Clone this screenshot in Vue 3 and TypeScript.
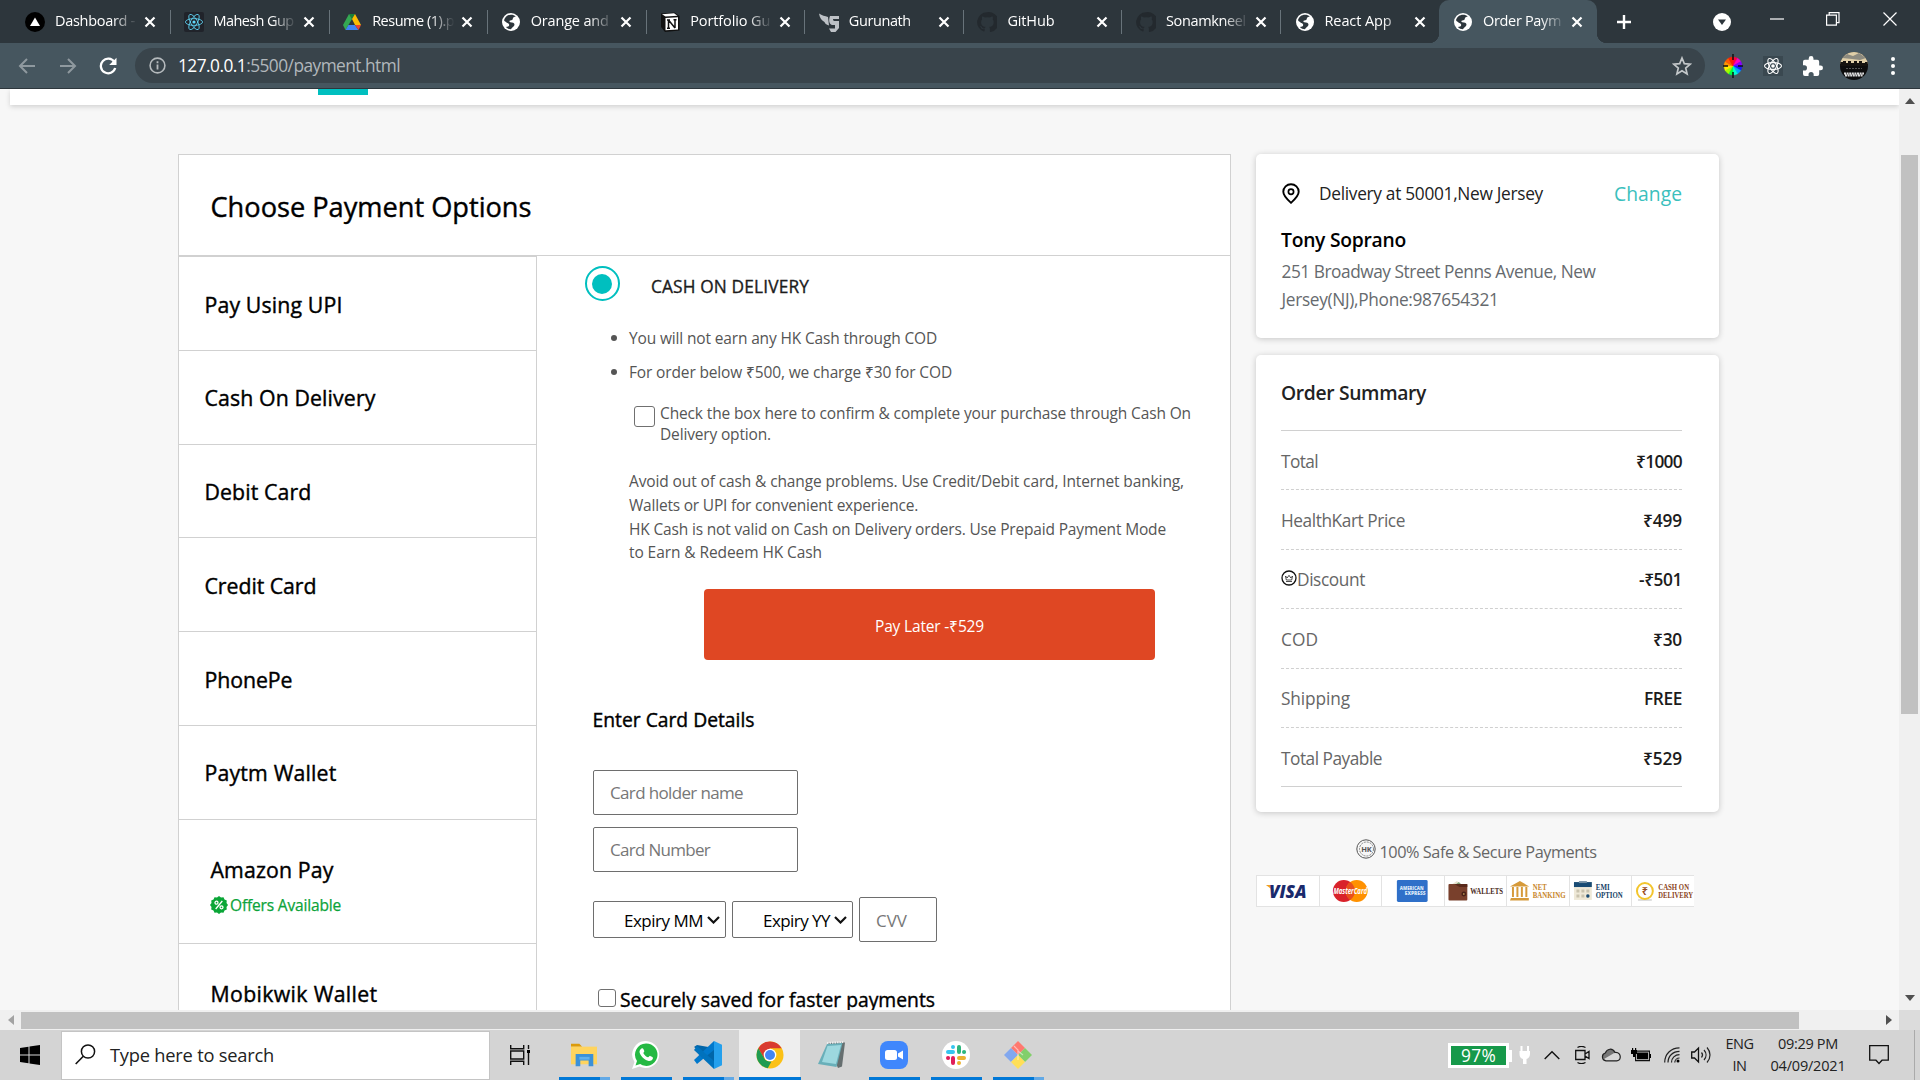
<script setup lang="ts">
interface Tab { title: string; icon: string; width: number; active?: boolean }
interface Option { label: string; width: number; offer?: boolean; inset?: boolean }
interface SummaryRow { label: string; width: number; value: string; valueWidth: number; crown?: boolean }
interface TaskApp { name: string; bar: 'none' | 'full' | 'split' | 'active' }

// Adjusts letter spacing so a single line of text occupies the given width.
const vFit = {
  mounted(el: HTMLElement, binding: { value: number }) {
    const range = document.createRange()
    range.selectNodeContents(el)
    const natural = range.getBoundingClientRect().width
    const count = Math.max(1, (el.textContent ?? '').trim().length)
    el.style.letterSpacing = `${((binding.value - natural) / count).toFixed(3)}px`
  },
}

const tabs: Tab[] = [
  { title: 'Dashboard -', icon: 'vercel', width: 80 },
  { title: 'Mahesh Gup', icon: 'react', width: 80 },
  { title: 'Resume (1).p', icon: 'drive', width: 82 },
  { title: 'Orange and', icon: 'globe', width: 78 },
  { title: 'Portfolio Gu', icon: 'notion', width: 80 },
  { title: 'Gurunath', icon: 'guru', width: 62 },
  { title: 'GitHub', icon: 'github', width: 47 },
  { title: 'Sonamkneel', icon: 'github', width: 80 },
  { title: 'React App', icon: 'globe', width: 67 },
  { title: 'Order Paym', icon: 'globe', width: 78, active: true },
]

const options: Option[] = [
  { label: 'Pay Using UPI', width: 138 },
  { label: 'Cash On Delivery', width: 171 },
  { label: 'Debit Card', width: 107 },
  { label: 'Credit Card', width: 112 },
  { label: 'PhonePe', width: 88 },
  { label: 'Paytm Wallet', width: 132 },
  { label: 'Amazon Pay', width: 123, offer: true, inset: true },
  { label: 'Mobikwik Wallet', width: 167, inset: true },
]

const advice = [
  { text: 'Avoid out of cash & change problems. Use Credit/Debit card, Internet banking,', width: 555 },
  { text: 'Wallets or UPI for convenient experience.', width: 289 },
  { text: 'HK Cash is not valid on Cash on Delivery orders. Use Prepaid Payment Mode', width: 537 },
  { text: 'to Earn & Redeem HK Cash', width: 193 },
]

const summary: SummaryRow[] = [
  { label: 'Total', width: 37, value: '₹1000', valueWidth: 46 },
  { label: 'HealthKart Price', width: 124, value: '₹499', valueWidth: 39 },
  { label: 'Discount', width: 68, value: '-₹501', valueWidth: 43, crown: true },
  { label: 'COD', width: 37, value: '₹30', valueWidth: 29 },
  { label: 'Shipping', width: 69, value: 'FREE', valueWidth: 38 },
  { label: 'Total Payable', width: 101, value: '₹529', valueWidth: 39 },
]

const apps: TaskApp[] = [
  { name: 'explorer', bar: 'split' },
  { name: 'whatsapp', bar: 'full' },
  { name: 'vscode', bar: 'split' },
  { name: 'chrome', bar: 'active' },
  { name: 'notepad', bar: 'none' },
  { name: 'zoom', bar: 'full' },
  { name: 'slack', bar: 'full' },
  { name: 'git', bar: 'split' },
]
const colorWheel = ['#ff0040', '#ff00c8', '#8a00ff', '#1a1aff', '#00a2ff', '#00ffd0', '#00ff40', '#9dff00', '#fff000', '#ff9500', '#ff5a00', '#ff2000']
</script>

<template>
  <div class="screen">
    <header class="tabbar">
      <div v-for="(t, i) in tabs" :key="i" class="tab" :class="{ active: t.active, last: i >= 8 }">
        <svg class="favicon" viewBox="0 0 20 20">
          <template v-if="t.icon === 'vercel'"><circle cx="10" cy="10" r="10" /><path d="M10 5.6 15 14H5z" fill="#fff" /></template>
          <template v-else-if="t.icon === 'react'">
            <rect width="20" height="20" rx="2" fill="#20232a" />
            <g fill="none" stroke="#61dafb" stroke-width=".8"><ellipse cx="10" cy="10" rx="8.6" ry="3.4" /><ellipse cx="10" cy="10" rx="8.6" ry="3.4" transform="rotate(60 10 10)" /><ellipse cx="10" cy="10" rx="8.6" ry="3.4" transform="rotate(120 10 10)" /></g><circle cx="10" cy="10" r="1.6" fill="#61dafb" />
          </template>
          <template v-else-if="t.icon === 'drive'">
            <path d="M7 2h6l-3 5z" fill="#188038" /><path d="M7 2l3 5-6.500 11L1 13z" fill="#34a853" /><path d="M13 2l6 11h-6L10 7z" fill="#fbbc04" /><path d="M6.400 13H13l3.500 5h-13z" fill="#4285f4" /><path d="M13 13h6l-2.500 5z" fill="#ea4335" />
          </template>
          <template v-else-if="t.icon === 'globe'">
            <circle cx="10" cy="10" r="9" fill="#fff" /><path d="M10 2.800c2 0 3.500.6 4.800 1.900-1.500 0-3 .6-3 2 0 1.300-1.200 1.500-2.500 1.700-1.200.2-1.200 1.700 0 1.900 2.200.2 4.200.4 4.200 2.300 0 2.200-2.100 2.500-3.600 4.600-2-.1-3.600-.8-5-2.300 1.600 0 3.300-.3 3.300-1.800C8.200 10.900 4.900 11.100 3 8.300c.9-3.300 3.500-5.500 7-5.500z" fill="#2d363c" />
          </template>
          <template v-else-if="t.icon === 'notion'">
            <path d="M1 1.500 14.500.500 19.500 4v14.500L5 20 1 15z" fill="#111" /><path d="M2 2.300 14 1.300 17.500 3.800 5.500 4.600z" fill="#fff" /><path d="M5.500 6 18 5.200v12.300L5.500 18.300z" fill="#fff" /><path d="M8.500 8v8.200M15 7.700v8.200M8.500 8l6.500 8M7 8h3M13.500 7.700h3M7 16.200h3" stroke="#111" stroke-width="1.500" />
          </template>
          <template v-else-if="t.icon === 'guru'">
            <path d="M0 1.500c3 2 6 2.500 9 3.500l1 8.500C7 12.500 6 11.500 5.500 10 3 8.500.500 6 0 1.500z" fill="#bdc1c6" /><path d="M11 4h9v3h-6c0 1.500.5 2 2 2h4v7l-3.500 4H12l-2-3.500h6V13h-3c-3-1-3.500-5-2-9z" fill="#bdc1c6" />
          </template>
          <path v-else d="M10 .300a9.900 9.900 0 0 0-3.100 19.300c.5.100.7-.2.700-.5v-2c-2.500.5-3.300-.6-3.600-1.300-.2-.4-.8-1.400-1.300-1.700 1.400-.4 2 .9 2.500 1.500.9 1.300 2.200.9 2.700.6.100-.6.4-1 .7-1.300-2.300-.3-4.500-1.200-4.500-5 0-1 .4-2 1-2.700-.1-.2-.4-1.200.1-2.600 0 0 .9-.3 2.700 1a9 9 0 0 1 5 0c1.800-1.300 2.700-1 2.700-1 .5 1.400.2 2.400.1 2.600.6.700 1 1.600 1 2.700 0 3.800-2.300 4.700-4.500 5 .4.300.7.900.7 1.900v2.700c0 .3.200.6.7.5A9.900 9.900 0 0 0 10 .300z" fill="#23292e" />
        </svg>
        <span class="tab-title"><span v-fit="t.width">{{ t.title }}</span></span>
        <svg class="tab-close" viewBox="0 0 12 12"><path d="M1.500 1.500l9 9m0-9l-9 9" stroke="#fff" stroke-width="2.200" /></svg>
      </div>
      <svg class="plus" viewBox="0 0 16 16"><path d="M8 1v14M1 8h14" stroke="#fff" stroke-width="2.400" /></svg>
      <div class="window-controls">
        <svg width="18" height="18" viewBox="0 0 18 18"><circle cx="9" cy="9" r="9" fill="#fff" /><path d="M5 6.500h8L9 12z" fill="#2d363c" /></svg>
        <svg width="14" height="14" viewBox="0 0 14 14"><path d="M0 7h14" stroke="#fff" stroke-width="1.200" /></svg>
        <svg width="14" height="14" viewBox="0 0 14 14"><path d="M.600 3.200h9.800v10H.600zM3.200 3V.600H13v10h-2.400" fill="none" stroke="#fff" stroke-width="1.200" /></svg>
        <svg width="14" height="14" viewBox="0 0 14 14"><path d="M.500.500l13 13m0-13l-13 13" stroke="#fff" stroke-width="1.200" /></svg>
      </div>
    </header>

    <div class="toolbar">
      <svg class="nav back" viewBox="0 0 18 18"><path d="M17 9H2m7-7L2 9l7 7" fill="none" stroke="#8f999f" stroke-width="2" /></svg>
      <svg class="nav forward" viewBox="0 0 18 18"><path d="M1 9h15M9 2l7 7-7 7" fill="none" stroke="#8f999f" stroke-width="2" /></svg>
      <svg class="nav reload" viewBox="0 0 18 18"><path d="M15.300 5A7.300 7.300 0 1 0 16.200 11" fill="none" stroke="#fff" stroke-width="2.300" /><path d="M17.500.700V8h-7.300z" fill="#fff" /></svg>
      <div class="omnibox">
        <svg width="17" height="17" viewBox="0 0 17 17"><circle cx="8.500" cy="8.500" r="7.400" fill="none" stroke="#b5babd" stroke-width="1.600" /><path d="M8.500 7.500v5M8.500 4.300v1.900" stroke="#b5babd" stroke-width="1.800" /></svg>
        <span v-fit="222" class="url"><b>127.0.0.1</b>:5500/payment.html</span>
        <svg class="star" viewBox="0 0 20 20"><path d="M10 2l2.300 5.600 6 .5-4.600 3.900 1.400 5.900L10 14.700l-5.100 3.200 1.400-5.900L1.700 8.100l6-.5z" fill="none" stroke="#c3c7c9" stroke-width="1.700" /></svg>
      </div>
      <div class="extensions">
        <svg width="20" height="24" viewBox="0 0 20 24"><g transform="translate(10 12)"><path v-for="(c, i) in colorWheel" :key="c" d="M0 0V-9A9 9 0 0 1 4.500-7.800z" :fill="c" :stroke="c" stroke-width=".4" :transform="`rotate(${i * 30})`" /></g><path d="M10 0v6m0 12v6M0 12h5m10 0h5" stroke="#111" stroke-width="1.500" /></svg>
        <svg width="20" height="20" viewBox="0 0 20 20"><rect width="20" height="20" fill="#3a4850" /><g fill="none" stroke="#fff" stroke-width="1.100"><ellipse cx="10" cy="10" rx="8.500" ry="3.400" /><ellipse cx="10" cy="10" rx="8.500" ry="3.400" transform="rotate(60 10 10)" /><ellipse cx="10" cy="10" rx="8.500" ry="3.400" transform="rotate(120 10 10)" /></g><circle cx="10" cy="10" r="1.800" fill="#fff" /></svg>
        <svg width="20" height="20" viewBox="2 1 21 21"><path d="M20.500 11H19V7a2 2 0 0 0-2-2h-4V3.500a2.500 2.500 0 0 0-5 0V5H4a2 2 0 0 0-2 2v3.800h1.500a2.700 2.700 0 0 1 0 5.400H2V20a2 2 0 0 0 2 2h3.800v-1.500a2.700 2.700 0 0 1 5.400 0V22H17a2 2 0 0 0 2-2v-4h1.500a2.500 2.500 0 0 0 0-5z" fill="#fff" /></svg>
        <svg width="28" height="28" viewBox="0 0 28 28"><clipPath id="avatar"><circle cx="14" cy="14" r="14" /></clipPath><g clip-path="url(#avatar)"><rect width="28" height="28" fill="#0d0d0d" /><path d="M0 0h28v12H0z" fill="#e0cfa8" /><path d="M2 6l5-4 6 2 6-3 7 5-6 2-8-1z" fill="#8d8b80" /><path d="M0 14v-4h3v-1h3v2h2v-2h3v2h3V9h3v2h2V9h3v2h3v-1h3v4z" fill="#16130f" /><path d="M4 21.500h20M5 23.500h18" stroke="#ddd" stroke-width="2" stroke-dasharray="2 .6" /><path d="M6 16.500h16" stroke="#555" stroke-dasharray="2 1" /></g></svg>
        <svg width="6" height="20" viewBox="0 0 6 20"><circle cx="3" cy="3" r="2" fill="#fff" /><circle cx="3" cy="10" r="2" fill="#fff" /><circle cx="3" cy="17" r="2" fill="#fff" /></svg>
      </div>
    </div>

    <div class="viewport">
      <div class="page">
        <div class="site-header"><i class="underline"></i></div>
        <div class="columns">
          <section class="panel">
            <div class="panel-head"><span v-fit="321">Choose Payment Options</span></div>
            <div class="panel-body">
              <nav class="options">
                <div v-for="o in options" :key="o.label" class="option" :class="{ inset: o.inset, tall: o.offer }">
                  <span v-fit="o.width">{{ o.label }}</span>
                  <div v-if="o.offer" class="offer">
                    <svg width="18" height="18" viewBox="0 0 18 18"><path d="M9 0l2 1.500 2.500-.3 1 2.300 2.300 1-.3 2.500L18 9l-1.500 2 .3 2.500-2.300 1-1 2.300-2.500-.3L9 18l-2-1.500-2.500.3-1-2.300-2.300-1 .3-2.500L0 9l1.500-2-.3-2.500 2.300-1 1-2.300 2.500.3z" fill="#0aa637" /><g fill="none" stroke="#fff" stroke-width="1.300"><path d="M12.300 5L5.700 13" /><circle cx="6.500" cy="6.700" r="1.500" /><circle cx="11.500" cy="11.300" r="1.500" /></g></svg>
                    <span v-fit="111">Offers Available</span>
                  </div>
                </div>
              </nav>
              <div class="detail">
                <div class="method">
                  <span class="radio"><i></i></span>
                  <span v-fit="158" class="method-name">CASH ON DELIVERY</span>
                </div>
                <ul class="notes">
                  <li><span v-fit="308">You will not earn any HK Cash through COD</span></li>
                  <li><span v-fit="323">For order below ₹500, we charge ₹30 for COD</span></li>
                </ul>
                <label class="confirm">
                  <i class="check"></i>
                  <span class="lines"><span v-fit="531">Check the box here to confirm &amp; complete your purchase through Cash On</span><span v-fit="111">Delivery option.</span></span>
                </label>
                <div class="advice"><span v-for="a in advice" :key="a.text" v-fit="a.width">{{ a.text }}</span></div>
                <button class="pay"><span v-fit="109">Pay Later -₹529</span></button>
                <h3 class="card-title"><span v-fit="162">Enter Card Details</span></h3>
                <div class="field"><span v-fit="133">Card holder name</span></div>
                <div class="field second"><span v-fit="100">Card Number</span></div>
                <div class="expiry">
                  <div class="select month"><span v-fit="79">Expiry MM</span><svg width="13" height="8" viewBox="0 0 13 8"><path d="M1 1l5.500 5.500L12 1" fill="none" stroke="#111" stroke-width="2.200" /></svg></div>
                  <div class="select year"><span v-fit="67">Expiry YY</span><svg width="13" height="8" viewBox="0 0 13 8"><path d="M1 1l5.500 5.500L12 1" fill="none" stroke="#111" stroke-width="2.200" /></svg></div>
                  <div class="field cvv"><span v-fit="31">CVV</span></div>
                </div>
                <label class="save"><i class="check small"></i><span v-fit="315">Securely saved for faster payments</span></label>
              </div>
            </div>
          </section>

          <aside class="sidebar">
            <div class="card address">
              <div class="deliver">
                <svg width="18" height="21" viewBox="0 0 18 21"><path d="M9 1.200a7.700 7.700 0 0 1 7.700 7.600c0 4.200-4.300 7.900-7.700 11-3.400-3.100-7.700-6.800-7.700-11A7.700 7.700 0 0 1 9 1.200z" fill="none" stroke="#000" stroke-width="1.900" /><circle cx="9" cy="8.800" r="2.600" fill="none" stroke="#000" stroke-width="1.700" /></svg>
                <span v-fit="224" class="place">Delivery at 50001,New Jersey</span>
                <a v-fit="68" class="change">Change</a>
              </div>
              <div class="person"><span v-fit="125">Tony Soprano</span></div>
              <div class="street"><span v-fit="314">251 Broadway Street Penns Avenue, New</span><span v-fit="217">Jersey(NJ),Phone:987654321</span></div>
            </div>
            <div class="card summary">
              <div class="summary-title"><span v-fit="145">Order Summary</span></div>
              <div class="rows">
                <div v-for="r in summary" :key="r.label" class="row">
                  <svg v-if="r.crown" class="crown" viewBox="0 0 16 16"><circle cx="8" cy="8" r="7" fill="none" stroke="#111" stroke-width="1.300" /><path d="M4.500 6l1.700 2L8 5.300 9.800 8l1.700-2-.8 4H5.300zM5 11.500h6" fill="none" stroke="#222" stroke-width=".8" /></svg>
                  <span v-fit="r.width" class="label">{{ r.label }}</span>
                  <span v-fit="r.valueWidth" class="value">{{ r.value }}</span>
                </div>
              </div>
            </div>
            <div class="safe">
              <svg width="20" height="20" viewBox="0 0 20 20"><circle cx="10" cy="10" r="9.200" fill="none" stroke="#555" stroke-width="1" /><circle cx="10.500" cy="10" r="7" fill="none" stroke="#777" stroke-width=".9" stroke-dasharray="2 1" /><text x="10.500" y="12.800" font-size="7.500" font-weight="700" fill="#555" text-anchor="middle">HK</text></svg>
              <span v-fit="217">100% Safe &amp; Secure Payments</span>
            </div>
            <div class="brands">
              <svg viewBox="0 0 62 30"><path d="M9 9h6l2 6z" fill="#f0a020" /><text x="12" y="22" font-size="18" font-weight="800" font-style="italic" fill="#1a2a6c" textLength="38" lengthAdjust="spacingAndGlyphs">VISA</text></svg>
              <svg viewBox="0 0 62 30"><circle cx="24" cy="15" r="11" fill="#d9222a" /><circle cx="37" cy="15" r="11" fill="#ff9100" /><path d="M30.500 6a11 11 0 0 1 0 18 11 11 0 0 1 0-18z" fill="#e8501e" /><text x="13.500" y="18.500" font-size="9" font-weight="700" font-style="italic" fill="#fff" textLength="34" lengthAdjust="spacingAndGlyphs">MasterCard</text></svg>
              <svg viewBox="0 0 62 30"><rect x="15" y="4" width="31" height="22" rx="1.500" fill="#2f70c9" /><g fill="#dce8f8" font-size="6" font-weight="800"><text x="18" y="14.500" textLength="24" lengthAdjust="spacingAndGlyphs">AMERICAN</text><text x="23" y="19.500" textLength="21" lengthAdjust="spacingAndGlyphs">EXPRESS</text></g></svg>
              <svg viewBox="0 0 62 30"><path d="M6 9l6-4 5 4z" fill="#e9e3cf" /><path d="M10 9l4-3 4 4z" fill="#7d9f75" /><rect x="3.500" y="8" width="19" height="16.500" rx="1" fill="#79402c" /><path d="M3.500 8h6l5 3h8v-3" fill="#59291b" /><circle cx="19" cy="18" r="2.500" fill="#4a2118" /><circle cx="19" cy="18" r=".8" fill="#e6c36b" /><text class="serif" x="25.500" y="18" font-size="7.500" fill="#4a2a1c" textLength="33" lengthAdjust="spacingAndGlyphs">WALLETS</text></svg>
              <svg viewBox="0 0 62 30"><path d="M3 10.500 13 5l9.500 5.500zM4 22h18v2.500H3z" fill="#d69a3a" /><path d="M6 11v10m4.500-10v10m4.500-10v10m4.500-10v10" stroke="#d69a3a" stroke-width="2" /><g class="serif" font-size="7.500" fill="#c8862b"><text x="26" y="13.500" textLength="14" lengthAdjust="spacingAndGlyphs">NET</text><text x="26" y="22.500" textLength="33" lengthAdjust="spacingAndGlyphs">BANKING</text></g></svg>
              <svg viewBox="0 0 62 30"><rect x="4" y="6" width="18" height="18" fill="#efe9d8" /><path d="M4 6h18v5H4z" fill="#194b74" /><path d="M9 6h8" stroke="#7590a5" stroke-width="2" /><g stroke="#c9c3ae" stroke-width="3" stroke-dasharray="3 2"><path d="M6.500 15h14M6.500 20h14" /></g><circle cx="18" cy="20" r="1.700" fill="#194b74" /><g class="serif" font-size="7.500" fill="#153f66"><text x="26" y="13.500" textLength="14" lengthAdjust="spacingAndGlyphs">EMI</text><text x="26" y="22.500" textLength="27" lengthAdjust="spacingAndGlyphs">OPTION</text></g></svg>
              <svg viewBox="0 0 62 30"><path d="M6 24h14" stroke="#ddd" stroke-width="2" /><circle cx="13" cy="15" r="8" fill="#fff" stroke="#f3c52d" stroke-width="2" /><text x="13" y="19" text-anchor="middle" font-size="11" font-weight="600" fill="#9a4b1a">₹</text><g class="serif" font-size="7.500" fill="#8b4522"><text x="26.500" y="13.500" textLength="31" lengthAdjust="spacingAndGlyphs">CASH ON</text><text x="26.500" y="22.500" textLength="35" lengthAdjust="spacingAndGlyphs">DELIVERY</text></g></svg>
            </div>
          </aside>
        </div>
      </div>
      <div class="vscroll"><svg viewBox="0 0 10 6"><path d="M0 6 5 0l5 6z" fill="#505050" /></svg><i></i><svg viewBox="0 0 10 6"><path d="M0 0h10L5 6z" fill="#505050" /></svg></div>
    </div>
    <div class="hscroll"><svg viewBox="0 0 6 10"><path d="M6 0v10L0 5z" fill="#a3a3a3" /></svg><i></i><svg class="right" viewBox="0 0 6 10"><path d="M0 0v10l6-5z" fill="#505050" /></svg><b></b></div>

    <footer class="taskbar">
      <div class="start"><svg width="20" height="20" viewBox="0 0 20 20"><path d="M0 3l8.500-1.200v7.700H0zM9.500 1.600 20 0v9.500H9.500zM0 10.500h8.500v7.700L0 17zM9.500 10.500H20V20L9.500 18.400z" /></svg></div>
      <div class="search">
        <svg width="21" height="21" viewBox="0 0 21 21"><circle cx="13" cy="7.500" r="6.600" fill="none" stroke="#111" stroke-width="1.500" /><path d="M8.300 12.200.700 20" stroke="#111" stroke-width="1.600" /></svg>
        <span v-fit="164">Type here to search</span>
      </div>
      <div class="taskview"><svg width="21" height="20" viewBox="0 0 21 20"><path d="M.700 0v3.700h13V0M.700 20v-3.700h13V20M.700 6h13v8h-13zM18.500 0v4m0 3.500V20" fill="none" stroke="#111" stroke-width="1.400" /><path d="M17 5h3v3h-3z" /></svg></div>
      <div v-for="a in apps" :key="a.name" class="app" :class="a.bar">
        <svg width="28" height="28" viewBox="0 0 28 28">
          <template v-if="a.name === 'explorer'"><path d="M0 2h9l3 3H0z" fill="#dc9b0b" /><path d="M0 5h28v19H0z" fill="#ffd45e" /><path d="M5 13h19v13h-5v-6h-9v6H5z" fill="#3c91d8" /><path d="M9 16h11v3H9z" fill="#60b0ec" /></template>
          <template v-else-if="a.name === 'whatsapp'"><path d="M14 0a13.500 13.500 0 1 1-6.500 25.500L0 28l2.500-7A13.500 13.500 0 0 1 14 0z" fill="#fff" /><path d="M14 2.500a11.200 11.200 0 1 1-5.800 20.600L3.500 24.600 5 20A11.200 11.200 0 0 1 14 2.500z" fill="#25b943" /><path d="M9.500 7.500c1.500-1 2 .5 2.800 2.500.3.900-1.200 1.500-.9 2.200 1 2 2.700 3.300 4.500 4.100.8.400 1.500-1.700 2.300-1.400 3.200 1.300 3 1.700 2.500 3.200-.6 1.600-2.900 2.200-4.700 1.700C12 18.500 8.500 15 7.600 11.500c-.4-1.700.6-3.200 1.900-4z" fill="#fff" /></template>
          <template v-else-if="a.name === 'vscode'"><path d="M20 7v14L0 6l3-2z" fill="#0065a9" /><path d="M20 0 0 19l3 4L21 8z" fill="#0078cc" /><path d="M3 5 20 20v8L0 9z" fill="#0072bd" /><path d="M20 0l8.500 4v20L20 28z" fill="#24a0ed" /></template>
          <template v-else-if="a.name === 'chrome'"><circle cx="14" cy="14" r="13.500" fill="#fbc116" /><path d="M2.300 7.300A13.500 13.500 0 0 1 25.700 7.300H14L8.200 17.500z" fill="#d93a2f" /><path d="M2.300 7.300 8.200 17.300c1.500 2.500 4 3.600 7.200 3.200L11.800 27.300A13.500 13.500 0 0 1 2.300 7.300z" fill="#1f9b51" /><circle cx="14" cy="14" r="6.300" fill="#fff" /><circle cx="14" cy="14" r="5" fill="#4285f4" /></template>
          <template v-else-if="a.name === 'notepad'"><path d="M9 2l18-.5-3 24-4 1.500z" fill="#666f70" /><path d="M9 3l15.500-1-6 24L0 23z" fill="#69afb9" /><path d="M9.500 5l13.500-1-5 19-14-2z" fill="#9dd8df" /><path d="M9 2l16-1" stroke="#eee" stroke-width="2" stroke-dasharray="1.500 1" /></template>
          <template v-else-if="a.name === 'zoom'"><rect width="28" height="28" rx="8" fill="#4087fc" /><rect x="5" y="9" width="12" height="10" rx="2.500" fill="#fff" /><path d="M18 12.500 23 9.500v9l-5-3z" fill="#fff" /></template>
          <template v-else-if="a.name === 'slack'"><circle cx="14" cy="14" r="14" fill="#fff" /><g stroke-width="4" stroke-linecap="round"><path d="M6 11h5m0-5v.1" stroke="#36c5f0" /><path d="M17 6v5m5 0h.1" stroke="#2eb67d" /><path d="M17 17h5m-5 5v.1" stroke="#ecb22e" /><path d="M11 17v5m-5-5h.1" stroke="#e01e5a" /></g></template>
          <template v-else><path d="M14 0l7 7-7 7-7-7z" fill="#ff7970" /><path d="M7 7l7 7-7 7-7-7z" fill="#82a8ef" /><path d="M21 7l7 7-7 7-7-7z" fill="#82cf6b" /><path d="M14 14l7 7-7 7-7-7z" fill="#ffdf58" /><path d="M10 5l4 4v10M14 10l5 4" fill="none" stroke="#fff" stroke-width="1.200" opacity=".5" /></template>
        </svg>
      </div>
      <div class="tray">
        <span class="percent"><span v-fit="35">97%</span></span>
        <svg class="plug" viewBox="0 0 12 18"><path d="M2.500 0v6m6.500-6v6" stroke="#fff" stroke-width="2" /><path d="M.500 5h10.500v3c0 3-2 4.500-3.500 5v5H4v-5C2 12.500.500 11 .500 8z" fill="#fff" /></svg>
        <svg class="chev" viewBox="0 0 16 10"><path d="M.700 9 8 1.700 15.300 9" fill="none" stroke="#111" stroke-width="1.400" /></svg>
        <svg class="meet" viewBox="0 0 15 18"><path d="M.700 4.500H10v9H.700zM10 8l4-2.500v7L10 10M2.500 1.500c2-1.300 5.500-1.300 8 0M2.500 16.500c2 1.300 5.500 1.300 8 0" fill="none" stroke="#111" stroke-width="1.300" /></svg>
        <svg class="cloud" viewBox="0 0 20 14"><path d="M5 12.800A4 4 0 0 1 4.300 5C6 .600 11.500-.500 14 4.500c4-.4 5.500 2.500 5.200 5-.2 2-1.700 3.300-3.500 3.300z" fill="#d8d8d8" /><path d="M1 9A4 4 0 0 1 4.300 5C6 .600 11.500-.500 14 4.500L9 7.500 3 11z" fill="#777" /><path d="M5 12.800A4 4 0 0 1 4.300 5C6 .600 11.500-.500 14 4.500c4-.4 5.500 2.500 5.200 5-.2 2-1.700 3.300-3.500 3.300z" fill="none" stroke="#222" stroke-width="1.200" /></svg>
        <svg class="battery" viewBox="0 0 20 14"><path d="M4.600 3.100h13.800v9.500H4.600z" fill="none" stroke="#111" stroke-width="1.200" /><path d="M6 4.500h11v6.700H6zM18.500 6h1.500v4h-1.500zM0 2h6v4H4v3H2V6H0zM1 0h1.200v2H1zM4 0h1.200v2H4z" /></svg>
        <svg class="wifi" viewBox="0 0 16 16"><g fill="none" stroke="#222" stroke-width="1.200"><path d="M.700 15.500C.700 7 7 .900 15.500.900" /><path d="M4 15.500C4 9 9 4.300 15.500 4.300M7.500 15.500c0-4.500 3.500-7.800 8-7.800M10.800 15.500c0-2.500 2-4.500 4.700-4.500" /></g><circle cx="14" cy="14" r="1.500" /></svg>
        <svg class="sound" viewBox="0 0 20 18"><path d="M.700 6H3.500L7.500 2v14l-4-4H.700z" fill="none" stroke="#111" stroke-width="1.300" /><path d="M10.500 6.500c1.300 1.500 1.300 3.500 0 5M13 4c2.700 3 2.700 7 0 10M16 1.500c4 4.500 4 10.500 0 15" fill="none" stroke="#222" stroke-width="1.200" /></svg>
        <div class="stack lang"><span v-fit="28">ENG</span><span v-fit="14">IN</span></div>
        <div class="stack clock"><span v-fit="60">09:29 PM</span><span v-fit="75">04/09/2021</span></div>
        <svg class="notice" viewBox="0 0 20 20"><path d="M.700.700h18.600v14.500H13l-3 3.300-3-3.300H.700z" fill="none" stroke="#111" stroke-width="1.300" /></svg>
        <i class="edge"></i>
      </div>
    </footer>
  </div>
</template>

<style>
html, body { margin: 0; overflow: hidden; }
</style>

<style scoped>
* { box-sizing: border-box; }
svg { display: block; flex: none; }
.screen { width: 1920px; height: 1080px; display: flex; flex-direction: column; overflow: hidden; font-family: "Open Sans", "Noto Sans", sans-serif; color: #000; white-space: nowrap; }
.tabbar { height: 43px; flex: none; background: #2d363c; display: flex; align-items: center; padding-left: 11.500px; }
.tab { position: relative; width: 158.570px; height: 43px; flex: none; display: flex; align-items: center; padding-left: 13.500px; }
.tab:nth-child(n+5):nth-child(-n+9) { padding-left: 14.500px; }
.tab::after { content: ""; position: absolute; right: -1px; top: 10px; width: 1px; height: 24px; background: #68737a; }
.tab.last::after { display: none; }
.tab.active { background: #46565f; border-radius: 10px 10px 0 0; padding-left: 14.500px; }
.tab.active::before { content: ""; position: absolute; inset: auto -10px 0; height: 10px; background: radial-gradient(circle at 0 0, transparent 10px, #46565f 10.500px) left / 10px 10px no-repeat, radial-gradient(circle at 100% 0, transparent 10px, #46565f 10.500px) right / 10px 10px no-repeat; }
.favicon { width: 20px; height: 20px; }
.tab-title { width: 85px; margin-left: 10px; margin-right: 4px; overflow: hidden; font-size: 14.500px; line-height: 24px; margin-top: -2px; color: #fff; -webkit-mask-image: linear-gradient(90deg, #000 68%, transparent 97%); mask-image: linear-gradient(90deg, #000 68%, transparent 97%); }
.tab-close { width: 12px; height: 12px; }
.tab.active .tab-close { margin-left: -1px; }
.plus { width: 16px; height: 16px; margin-left: 19px; }
.window-controls { display: flex; align-items: center; margin-left: 81px; gap: 41px; }
.window-controls svg:first-child { margin-right: -2px; margin-top: 0; }
.window-controls svg:not(:first-child) { margin-top: -6px; }
.window-controls svg:nth-child(3) { margin-left: 1px; margin-right: 2px; }

.toolbar { height: 46px; flex: none; background: #46565f; border-bottom: 1px solid #2d363c; display: flex; align-items: center; }
.nav { width: 18px; height: 18px; }
.back { margin-left: 18px; }
.forward { margin-left: 23px; }
.reload { margin-left: 22px; }
.omnibox { width: 1570px; height: 35px; margin-left: 18px; border-radius: 18px; background: #39444b; display: flex; align-items: center; padding: 0 13px 0 14px; }
.url { margin-left: 12px; font-size: 17.300px; color: #b1b7bb; }
.url b { color: #fff; font-weight: 400; }
.star { width: 20px; height: 20px; margin-left: auto; }
.extensions { display: flex; align-items: center; margin-left: 17.500px; gap: 20px; }
.extensions svg:nth-child(4) { margin-left: -3px; }
.extensions svg:nth-child(5) { margin-left: 2px; }

.viewport { height: 921px; flex: none; display: flex; }
.page { width: 1899px; height: 921px; overflow: hidden; background: #f7f7f7; }
.site-header { height: 16px; margin-left: 10px; background: #fff; box-shadow: 0 2px 5px rgba(0, 0, 0, .15); padding-left: 308px; }
.underline { display: block; width: 50px; height: 6px; background: #00bfbf; }
.columns { display: flex; align-items: flex-start; margin: 49px 0 0 178px; }
.panel { width: 1053px; flex: none; background: #fff; }
.panel-head { height: 102px; border: 1px solid #d1d1d1; padding: 2px 0 0 31.500px; line-height: 100px; font-size: 27.200px; -webkit-text-stroke: .400px currentColor; }
.panel-body { display: flex; height: 900px; border: solid #d1d1d1; border-width: 0 1px; }
.options { width: 358px; flex: none; border-top: 1px solid #d1d1d1; border-right: 1px solid #d1d1d1; }
.option { height: 93.800px; border-bottom: 1px solid #d1d1d1; padding: 2.500px 0 0 25.500px; line-height: 90px; font-size: 21.300px; -webkit-text-stroke: .400px currentColor; }
.option.inset { padding-left: 31.500px; padding-top: 5px; }
.option.tall { height: 123.800px; padding-top: 35px; line-height: 30px; }
.offer { display: flex; align-items: center; gap: 2.500px; margin-left: -1px; margin-top: 5px; font-size: 15.500px; color: #0ba33a; -webkit-text-stroke: .250px currentColor; }
.detail { flex: 1; padding-top: 10px; color: #555; font-size: 15.500px; }
.method { display: flex; align-items: center; height: 35px; padding-left: 48px; }
.radio { width: 35px; height: 35px; border: 2px solid #00bfbf; border-radius: 50%; display: grid; place-items: center; }
.radio i { width: 20px; height: 20px; border-radius: 50%; background: #00bfbf; margin-left: -1px; }
.method-name { margin-left: 31px; padding-top: 5px; color: #1c1c1c; font-size: 17.300px; -webkit-text-stroke: .350px currentColor; }
.notes { list-style: none; margin: 20px 0 0; padding: 0 0 0 74px; }
.notes li { display: flex; align-items: center; gap: 12px; height: 34px; line-height: 34px; }
.notes li::before { content: ""; width: 6px; height: 6px; border-radius: 50%; background: #555; }
.confirm { display: flex; margin: 12.500px 0 0 97px; }
.check { width: 21px; height: 21px; flex: none; border: 1.500px solid #707070; border-radius: 3px; background: #fff; margin-top: 4.500px; }
.lines { display: flex; flex-direction: column; align-items: flex-start; margin: 1px 0 -1px 5px; line-height: 21px; }
.advice { display: flex; flex-direction: column; align-items: flex-start; margin: 26.700px 0 -1px 92px; line-height: 23.700px; }
.pay { display: block; width: 451px; height: 71px; margin: 25px 0 0 167px; padding: 2px 0 0; border: 0; border-radius: 4px; background: #df4723; color: #fff; font: 15.500px "Open Sans", sans-serif; }
.card-title { margin: 45px 0 0 55.500px; line-height: 30px; color: #000; font-size: 19.300px; font-weight: 400; -webkit-text-stroke: .400px currentColor; }
.field { width: 205px; height: 45px; margin: 35px 0 0 56px; padding-left: 16px; border: 1px solid #6e6e6e; border-radius: 2px; line-height: 44px; font-size: 17px; color: #777; }
.field.second { margin-top: 12px; line-height: 44px; }
.expiry { display: flex; align-items: center; margin: 25px 0 0 56px; }
.select { display: flex; align-items: center; justify-content: space-between; height: 37px; border: 1px solid #6e6e6e; border-radius: 2px; padding: 0 5px 0 30px; color: #000; font-size: 17px; }
.select span { padding-top: 2px; }
.month { width: 133px; }
.year { width: 121px; margin-left: 6px; }
.field.cvv { width: 78px; margin: 0 0 0 6px; line-height: 45px; }
.save { display: flex; align-items: center; margin: 44px 0 0 61px; height: 24px; color: #000; font-size: 19.300px; -webkit-text-stroke: .400px currentColor; }
.save span { padding-top: 2px; }
.check.small { width: 18px; height: 18px; margin: 0 4px 0 0; }

.sidebar { width: 463px; margin-left: 25px; }
.card { background: #fff; border-radius: 5px; box-shadow: 0 1px 6px rgba(0, 0, 0, .2); padding-left: 25px; padding-right: 37px; }
.address { height: 184px; padding-top: 24.500px; }
.deliver { display: flex; align-items: center; height: 30px; padding-left: 1px; }
.deliver svg { margin-top: -1px; }
.place { margin-left: 19px; font-size: 17.300px; color: #222; }
.change { margin-left: auto; font-size: 19.300px; color: #3bbfbd; }
.person { margin-top: 16px; line-height: 30px; font-size: 19.300px; font-weight: 600; }
.street { display: flex; flex-direction: column; align-items: flex-start; margin: 3.600px 0 0 .500px; line-height: 28px; font-size: 17.300px; color: #666a6e; }
.summary { height: 457px; margin-top: 17px; padding-top: 22.600px; }
.summary-title { line-height: 30px; font-size: 19.300px; font-weight: 600; color: #222; }
.rows { margin-top: 22.400px; border-top: 1px solid #d0d0d0; }
.row { display: flex; align-items: center; height: 59.400px; border-bottom: 1px dashed #d0d0d0; font-size: 17.300px; padding-top: 2px; }
.row:last-child { border-bottom-style: solid; }
.crown { width: 16px; height: 16px; margin-top: -4px; }
.label { color: #666; }
.value { margin-left: auto; color: #1c1c1c; font-weight: 600; }
.safe { display: flex; align-items: center; height: 30px; margin: 25.400px 0 0 99.500px; gap: 4px; font-size: 16.300px; color: #666; }
.safe svg { margin-top: -7px; }
.brands { display: flex; margin-top: 7.600px; width: 438px; height: 32px; overflow: hidden; border: 1px solid #e3e3e3; border-right: 0; }
.brands svg { width: 62.500px; height: 30px; background: #fff; border-right: 1px solid #e3e3e3; }
.serif { font-family: "Liberation Serif", serif; font-weight: 700; }

.vscroll { width: 21px; background: #f0f0f0; display: flex; flex-direction: column; align-items: center; padding-top: 9px; }
.vscroll svg { width: 10px; height: 6px; }
.vscroll i { width: 17px; height: 559px; margin: 51px 0 281px; background: #c1c1c1; }
.hscroll { height: 20px; flex: none; background: #f0f0f0; display: flex; align-items: center; padding-left: 8px; }
.hscroll svg { width: 6px; height: 10px; }
.hscroll i { width: 1778px; height: 17px; margin-left: 7px; background: #c1c1c1; }
.hscroll .right { margin-left: 87px; margin-right: 7px; }
.hscroll b { flex: 1; height: 20px; background: #dcdcdc; }

.taskbar { height: 50px; flex: none; background: #d4d4d4; display: flex; align-items: center; }
.start { width: 61px; padding-left: 20px; }
.search { width: 429px; height: 49px; background: #fff; border: 1px solid #c4c4c4; display: flex; align-items: center; padding: 0 0 2px 13px; gap: 14px; font-size: 18.300px; color: #222; }
.taskview { width: 63px; padding-left: 19.500px; }
.app { position: relative; width: 62px; height: 50px; display: flex; align-items: center; justify-content: center; }
.app::after { content: ""; position: absolute; bottom: 0; left: 6px; width: 51px; height: 3px; background: #0078d7; }
.app.none::after { display: none; }
.app.split::after { background: linear-gradient(90deg, #0078d7 41px, #62a9e6 41px); }
.app.active { background: linear-gradient(90deg, transparent .500px, #eee .500px, #eee 61.500px, transparent 61.500px); }
.app.active::after { left: 0; width: 62px; }
.taskbar .app:nth-child(4) svg { height: 26px; }
.tray { flex: 1; display: flex; align-items: center; padding-left: 399px; color: #222; }
.percent { position: relative; width: 61px; height: 25px; border: 3px solid #fff; background: #16994a; color: #fff; font-size: 17.300px; line-height: 19px; text-align: center; }
.percent::after { content: ""; position: absolute; left: 58px; top: 4px; width: 3px; height: 12px; background: #fff; }
.plug { width: 12px; height: 18px; margin-left: 10px; }
.chev { width: 16px; height: 10px; margin-left: 13px; }
.meet { width: 15px; height: 18px; margin-left: 15px; }
.cloud { width: 20px; height: 14px; margin-left: 11px; }
.battery { width: 20px; height: 14px; margin-left: 10px; }
.wifi { width: 16px; height: 16px; margin-left: 13px; }
.sound { width: 20px; height: 18px; margin-left: 11px; }
.stack { display: flex; flex-direction: column; align-items: center; line-height: 22.500px; font-size: 14.500px; }
.lang { width: 29px; margin-left: 14px; }
.clock { width: 76px; margin-left: 16px; }
.notice { width: 20px; height: 20px; margin-left: 23px; }
.edge { width: 1px; height: 50px; margin-left: 25px; background: #aaa; }
</style>
